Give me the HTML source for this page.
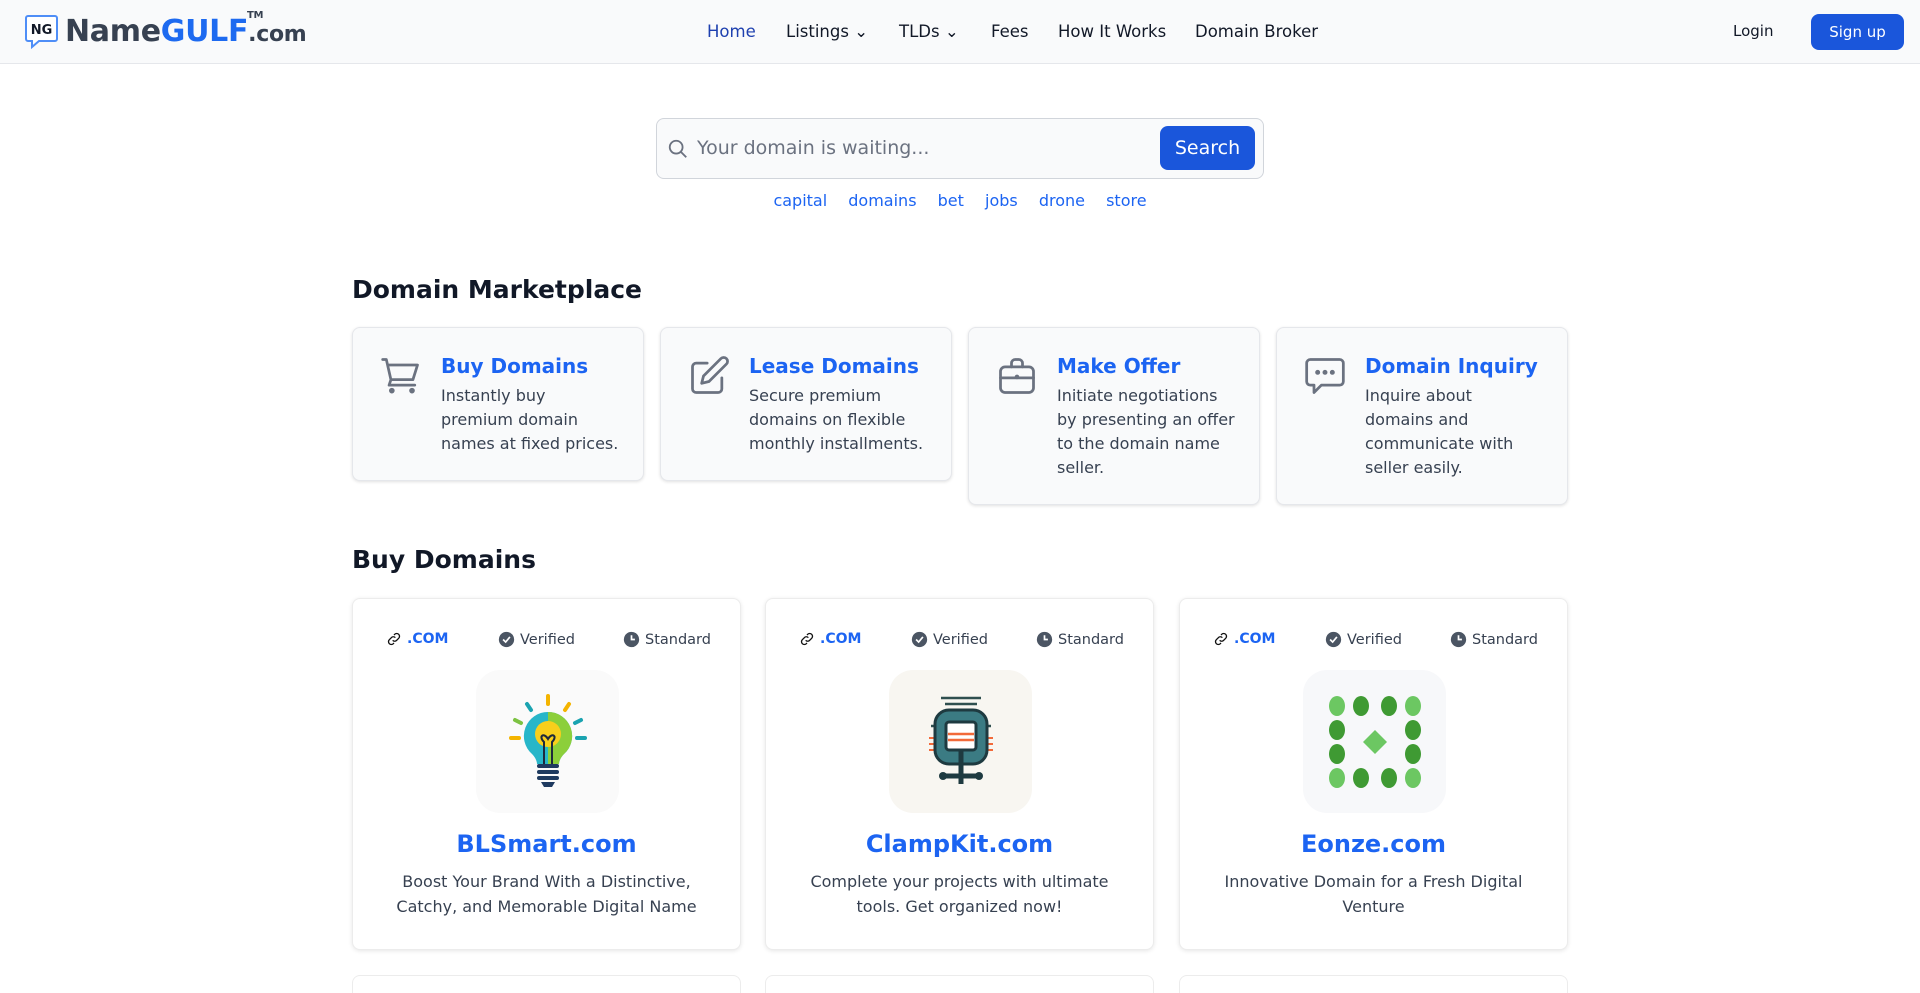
<!DOCTYPE html>
<html style="width:1920px;height:993px;overflow:hidden"><head><meta charset="utf-8"><style>
*{box-sizing:border-box;margin:0;padding:0}
body{width:1920px;height:993px;overflow:hidden;position:relative;background:#fff;font-family:"DejaVu Sans","Liberation Sans",sans-serif;color:#111827}
.nav{position:absolute;left:0;top:0;width:1920px;height:64px;background:#f9fafb;border-bottom:1px solid #e5e7eb}
.logo{position:absolute;left:24px;top:13px;display:flex;align-items:center}
.logo .t{font-weight:bold;font-size:30px;color:#374151;letter-spacing:-0.3px;position:relative}
.logo .t b{color:#1d6af0}
.logo .t small{font-size:22px}
.logo .tm{position:absolute;left:182px;top:-4px;font-size:10px;font-weight:bold;color:#374151}
.links{position:absolute;top:22px;font-size:16.5px;color:#111827}
.links span{position:absolute;white-space:nowrap}
.btn{background:#1a56db;color:#fff;border-radius:8px}
.search{position:absolute;left:656px;top:118px;width:608px;height:61px;border:1px solid #d1d5db;border-radius:8px;background:#f9fafb}
.search .ph{position:absolute;left:40px;top:18px;font-size:19px;color:#6b7280}
.search .sb{position:absolute;left:503px;top:7px;width:95px;height:44px;font-size:19px;line-height:44px;text-align:center}
.tags{position:absolute;top:191px;left:0;width:1920px;text-align:center;font-size:16px;color:#1c64f2}
.tags span{margin:0 8px}
h2{position:absolute;left:352px;font-size:25px;font-weight:bold;color:#111827}
.mc{position:absolute;top:327px;width:292px;background:#f9fafb;border:1px solid #e5e7eb;border-radius:8px;box-shadow:0 1px 3px rgba(0,0,0,.12)}
.mc svg{position:absolute;left:26px;top:26px}
.mc .h{position:absolute;left:88px;top:26px;font-size:20px;font-weight:bold;color:#1c64f2;white-space:nowrap}
.mc .d{position:absolute;left:88px;top:56px;font-size:16px;line-height:24px;color:#374151;white-space:nowrap}
.dc{position:absolute;top:598px;width:389px;height:352px;background:#fff;border:1px solid #ececec;border-radius:8px;box-shadow:0 1px 4px rgba(0,0,0,.1)}
.dc .bad{position:absolute;top:32px;left:0;width:100%;font-size:14.5px;color:#374151}
.dc .bad span{position:absolute;display:flex;align-items:center;gap:5px;white-space:nowrap}
.dc .img{position:absolute;left:123px;top:71px;width:143px;height:143px;border-radius:24px;background:#fafafa;display:flex;align-items:center;justify-content:center}
.dc .n{position:absolute;top:231px;width:100%;text-align:center;font-size:24px;font-weight:bold;color:#1c64f2}
.dc .ds{position:absolute;top:270px;left:30px;right:30px;text-align:center;font-size:16px;line-height:25px;color:#374151}
.dc2{position:absolute;top:975px;width:389px;height:18px;border:1px solid #ececec;border-bottom:none;border-radius:8px 8px 0 0}
</style></head><body>
<div class="nav">
 <div class="logo">
  <svg width="36" height="36" viewBox="0 0 36 36"><path d="M4 3h27a2 2 0 0 1 2 2v21a2 2 0 0 1-2 2H15l-7 6v-6H4a2 2 0 0 1-2-2V5a2 2 0 0 1 2-2z" fill="#fff" stroke="#4f8ef7" stroke-width="2"/><text x="17.5" y="21" text-anchor="middle" font-size="13" font-weight="bold" fill="#111827" font-family="DejaVu Sans">NG</text></svg>
  <div class="t" style="margin-left:5px">Name<b>GULF</b><small>.com</small><span class="tm">TM</span></div>
 </div>
 <div class="links">
  <span style="left:707px;color:#1e40af">Home</span>
  <span style="left:786px">Listings ⌄</span>
  <span style="left:899px">TLDs ⌄</span>
  <span style="left:991px">Fees</span>
  <span style="left:1058px">How It Works</span>
  <span style="left:1195px">Domain Broker</span>
 </div>
 <div style="position:absolute;left:1733px;top:22px;font-size:15px">Login</div>
 <div class="btn" style="position:absolute;left:1811px;top:14px;width:93px;height:36px;line-height:36px;text-align:center;font-size:15px">Sign up</div>
</div>
<div class="search">
 <svg style="position:absolute;left:10px;top:19px" width="22" height="22" viewBox="0 0 24 24" fill="none" stroke="#6b7280" stroke-width="2"><circle cx="10" cy="10" r="7"/><path d="M15 15l6 6"/></svg>
 <div class="ph">Your domain is waiting...</div>
 <div class="btn sb">Search</div>
</div>
<div class="tags"><span>capital</span> <span>domains</span> <span>bet</span> <span>jobs</span> <span>drone</span> <span>store</span></div>
<h2 style="top:275px">Domain Marketplace</h2>
<div class="mc" style="left:352px;height:154px">
 <svg width="44" height="44" viewBox="0 0 24 24" fill="none" stroke="#6b7280" stroke-width="1.5" stroke-linecap="round" stroke-linejoin="round"><path d="M2 3h2l2.5 11h12L21 6H5.5"/><path d="M6.5 14L5.5 17h14"/><circle cx="7" cy="20" r=".8" fill="#6b7280"/><circle cx="18" cy="20" r=".8" fill="#6b7280"/></svg>
 <div class="h">Buy Domains</div><div class="d">Instantly buy<br>premium domain<br>names at fixed prices.</div></div>
<div class="mc" style="left:660px;height:154px">
 <svg width="44" height="44" viewBox="0 0 24 24" fill="none" stroke="#6b7280" stroke-width="1.5" stroke-linecap="round" stroke-linejoin="round"><path d="M11 5H5a2 2 0 0 0-2 2v12a2 2 0 0 0 2 2h12a2 2 0 0 0 2-2v-6"/><path d="M18.5 2.5a2 2 0 0 1 3 3L12 15l-4 1 1-4z"/></svg>
 <div class="h">Lease Domains</div><div class="d">Secure premium<br>domains on flexible<br>monthly installments.</div></div>
<div class="mc" style="left:968px;height:178px">
 <svg width="44" height="44" viewBox="0 0 24 24" fill="none" stroke="#6b7280" stroke-width="1.5" stroke-linecap="round" stroke-linejoin="round"><rect x="3" y="7" width="18" height="14" rx="2.5"/><path d="M9 7V5a2 2 0 0 1 2-2h2a2 2 0 0 1 2 2v2"/><path d="M3 13h18"/><circle cx="12" cy="12.5" r=".5" fill="#6b7280"/></svg>
 <div class="h">Make Offer</div><div class="d">Initiate negotiations<br>by presenting an offer<br>to the domain name<br>seller.</div></div>
<div class="mc" style="left:1276px;height:178px">
 <svg width="44" height="44" viewBox="0 0 24 24" fill="none" stroke="#6b7280" stroke-width="1.5" stroke-linecap="round" stroke-linejoin="round"><path d="M4 3h16a2 2 0 0 1 2 2v10a2 2 0 0 1-2 2h-10l-4 4v-4H4a2 2 0 0 1-2-2V5a2 2 0 0 1 2-2z"/><circle cx="8" cy="10" r=".6" fill="#6b7280"/><circle cx="12" cy="10" r=".6" fill="#6b7280"/><circle cx="16" cy="10" r=".6" fill="#6b7280"/></svg>
 <div class="h">Domain Inquiry</div><div class="d">Inquire about<br>domains and<br>communicate with<br>seller easily.</div></div>
<h2 style="top:545px">Buy Domains</h2>

<div class="dc" style="left:352px">
 <div class="bad"><span style="left:33px"><svg width="16" height="16" viewBox="0 0 24 24" fill="none" stroke="#111" stroke-width="2"><path d="M10 14a4 4 0 0 0 6 0l3-3a4 4 0 0 0-6-6l-1 1"/><path d="M14 10a4 4 0 0 0-6 0l-3 3a4 4 0 0 0 6 6l1-1"/></svg><b style="color:#1c64f2;font-size:14px">.COM</b></span><span style="left:145px"><svg width="17" height="17" viewBox="0 0 20 20"><circle cx="10" cy="10" r="9" fill="#4b5563"/><path d="M6 10l3 3 5-6" stroke="#fff" stroke-width="2" fill="none"/></svg>Verified</span><span style="left:270px"><svg width="17" height="17" viewBox="0 0 20 20"><circle cx="10" cy="10" r="9" fill="#4b5563"/><path d="M10 5v5h4" stroke="#fff" stroke-width="2" fill="none"/></svg>Standard</span></div>
 <div class="img"><svg width="90" height="100" viewBox="0 0 90 100"><g stroke-width="4" stroke-linecap="round"><path d="M45 4v8" stroke="#f4b400"/><path d="M24 12l4 6" stroke="#1aa3b0"/><path d="M66 12l-4 6" stroke="#f4b400"/><path d="M12 28l6 3" stroke="#7cc242"/><path d="M78 28l-6 3" stroke="#1aa3b0"/><path d="M8 46h8" stroke="#f4b400"/><path d="M74 46h8" stroke="#1aa3b0"/></g><path d="M45 20a24 24 0 0 0-16 42c3 3 5 7 5 10h22c0-3 2-7 5-10a24 24 0 0 0-16-42z" fill="#27b6c9"/><path d="M45 20a24 24 0 0 1 16 42c-3 3-5 7-5 10H45z" fill="#8ccf3a"/><circle cx="45" cy="42" r="13" fill="#f8cf1c"/><path d="M41 72V50c-6-6 0-10 4-3 4-7 10-3 4 3v22" stroke="#1e293b" stroke-width="2" fill="none"/><g fill="#1e3a5f"><rect x="34" y="72" width="22" height="4" rx="2"/><rect x="34" y="78" width="22" height="4" rx="2"/><rect x="34" y="84" width="22" height="4" rx="2"/><path d="M38 90h14l-3 5h-8z"/></g></svg></div>
 <div class="n">BLSmart.com</div>
 <div class="ds">Boost Your Brand With a Distinctive, Catchy, and Memorable Digital Name</div>
</div>

<div class="dc" style="left:765px">
 <div class="bad"><span style="left:33px"><svg width="16" height="16" viewBox="0 0 24 24" fill="none" stroke="#111" stroke-width="2"><path d="M10 14a4 4 0 0 0 6 0l3-3a4 4 0 0 0-6-6l-1 1"/><path d="M14 10a4 4 0 0 0-6 0l-3 3a4 4 0 0 0 6 6l1-1"/></svg><b style="color:#1c64f2;font-size:14px">.COM</b></span><span style="left:145px"><svg width="17" height="17" viewBox="0 0 20 20"><circle cx="10" cy="10" r="9" fill="#4b5563"/><path d="M6 10l3 3 5-6" stroke="#fff" stroke-width="2" fill="none"/></svg>Verified</span><span style="left:270px"><svg width="17" height="17" viewBox="0 0 20 20"><circle cx="10" cy="10" r="9" fill="#4b5563"/><path d="M10 5v5h4" stroke="#fff" stroke-width="2" fill="none"/></svg>Standard</span></div>
 <div class="img" style="background:#f8f6f1"><svg width="80" height="96" viewBox="0 0 80 96"><g stroke="#2f4f4f" stroke-width="2.5"><path d="M20 4h40M24 10h32M10 32h10M60 32h10"/></g><g stroke="#f26a3a" stroke-width="2"><path d="M8 44h64M8 50h64M8 56h64"/></g><rect x="14" y="16" width="52" height="54" rx="14" fill="#3b7b83" stroke="#1e3a40" stroke-width="3"/><rect x="25" y="28" width="30" height="28" rx="3" fill="#fff" stroke="#1e3a40" stroke-width="3"/><g stroke="#f26a3a" stroke-width="2.5"><path d="M27 40h26M27 46h26"/></g><path d="M40 56v34M24 82h32" stroke="#1e3a40" stroke-width="5"/><circle cx="22" cy="82" r="4" fill="#1e3a40"/><circle cx="58" cy="82" r="4" fill="#1e3a40"/></svg></div>
 <div class="n">ClampKit.com</div>
 <div class="ds">Complete your projects with ultimate tools. Get organized now!</div>
</div>

<div class="dc" style="left:1179px">
 <div class="bad"><span style="left:33px"><svg width="16" height="16" viewBox="0 0 24 24" fill="none" stroke="#111" stroke-width="2"><path d="M10 14a4 4 0 0 0 6 0l3-3a4 4 0 0 0-6-6l-1 1"/><path d="M14 10a4 4 0 0 0-6 0l-3 3a4 4 0 0 0 6 6l1-1"/></svg><b style="color:#1c64f2;font-size:14px">.COM</b></span><span style="left:145px"><svg width="17" height="17" viewBox="0 0 20 20"><circle cx="10" cy="10" r="9" fill="#4b5563"/><path d="M6 10l3 3 5-6" stroke="#fff" stroke-width="2" fill="none"/></svg>Verified</span><span style="left:270px"><svg width="17" height="17" viewBox="0 0 20 20"><circle cx="10" cy="10" r="9" fill="#4b5563"/><path d="M10 5v5h4" stroke="#fff" stroke-width="2" fill="none"/></svg>Standard</span></div>
 <div class="img" style="background:#f7f8fa"><svg width="92" height="92" viewBox="0 0 92 92"><g fill="#6cc762"><ellipse cx="8" cy="10" rx="8" ry="10"/><ellipse cx="84" cy="10" rx="8" ry="10"/><ellipse cx="8" cy="82" rx="8" ry="10"/><ellipse cx="84" cy="82" rx="8" ry="10"/><path d="M46 34l12 12-12 12-12-12z"/></g><g fill="#3f9a33"><ellipse cx="32" cy="10" rx="8" ry="10"/><ellipse cx="60" cy="10" rx="8" ry="10"/><ellipse cx="32" cy="82" rx="8" ry="10"/><ellipse cx="60" cy="82" rx="8" ry="10"/><ellipse cx="8" cy="34" rx="8" ry="10"/><ellipse cx="8" cy="58" rx="8" ry="10"/><ellipse cx="84" cy="34" rx="8" ry="10"/><ellipse cx="84" cy="58" rx="8" ry="10"/></g></svg></div>
 <div class="n">Eonze.com</div>
 <div class="ds">Innovative Domain for a Fresh Digital Venture</div>
</div>
<div class="dc2" style="left:352px"></div><div class="dc2" style="left:765px"></div><div class="dc2" style="left:1179px"></div>
</body></html>
